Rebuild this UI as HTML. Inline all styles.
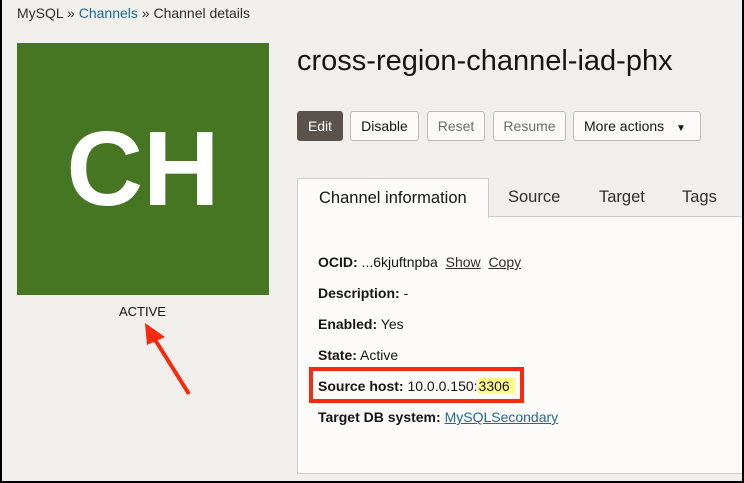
<!DOCTYPE html>
<html><head><meta charset="utf-8"><style>
*{margin:0;padding:0;box-sizing:border-box}
body{width:744px;height:483px;overflow:hidden;background:#000;font-family:"Liberation Sans",sans-serif;color:#161513}
#f{position:absolute;left:2px;top:0;width:740px;height:481px;background:#f1efec;overflow:hidden}
.a{position:absolute;white-space:nowrap}
.bc{left:15px;top:5px;font-size:14px;color:#312d2a}
.bc span{color:#1e6a8e}
.tile{left:15px;top:43px;width:252px;height:252px;background:#467622;color:#fff;font-size:106px;font-weight:bold;text-align:center;line-height:252px}
.act{left:117px;top:304px;font-size:13px;color:#161513}
h1{position:absolute;left:295px;top:45px;font-size:29px;font-weight:normal;color:#161513}
.btn{position:absolute;top:111px;height:30px;border:1px solid #bdb9b4;border-radius:3px;background:#fbfaf9;font-size:14px;line-height:28px;text-align:center;color:#161513}
.dis{color:#6f6c69}
.panel{left:295px;top:216px;width:450px;height:258px;background:#fcfbfa;border:1px solid #cfccc8}
.tab{left:295px;top:178px;width:192px;height:40px;background:#fcfbfa;border:1px solid #cfccc8;border-bottom:none;font-size:16.5px;line-height:38px;padding-left:21px}
.t2{font-size:16.5px;top:188px;color:#312d2a}
.row{position:absolute;left:316px;font-size:14px;color:#161513}
.row b{font-weight:bold}
u{color:#312d2a}
</style></head><body><div id="f">
<div class="a bc">MySQL » <span>Channels</span> » Channel details</div>
<div class="a tile">CH</div>
<div class="a act">ACTIVE</div>
<svg class="a" style="left:0;top:0" width="740" height="481"><line x1="187" y1="394" x2="152" y2="338" stroke="#f52a0e" stroke-width="4"/><polygon points="143,323 163,337 145,345" fill="#f52a0e"/></svg>
<h1>cross-region-channel-iad-phx</h1>
<div class="btn" style="left:295px;width:46px;background:#5b524e;border-color:#5b524e;color:#fff">Edit</div>
<div class="btn" style="left:348px;width:69px">Disable</div>
<div class="btn dis" style="left:425px;width:58px">Reset</div>
<div class="btn dis" style="left:491px;width:73px">Resume</div>
<div class="btn" style="left:571px;width:128px;text-align:left;padding-left:10px">More actions <span style="font-size:10px;margin-left:8px">▼</span></div>
<div class="a panel"></div>
<div class="a tab">Channel information</div>
<div class="a t2" style="left:506px">Source</div>
<div class="a t2" style="left:597px">Target</div>
<div class="a t2" style="left:680px">Tags</div>
<div class="row" style="top:254px"><b>OCID:</b> ...6kjuftnpba &nbsp;<u>Show</u> &nbsp;<u>Copy</u></div>
<div class="row" style="top:285px"><b>Description:</b> -</div>
<div class="row" style="top:316px"><b>Enabled:</b> Yes</div>
<div class="row" style="top:347px"><b>State:</b> Active</div>
<div class="a" style="left:307px;top:367px;width:215px;height:36px;border:4px solid #f52a0e"></div>
<div class="row" style="top:378px"><b>Source host:</b> 10.0.0.150:<span style="background:#fdf98a;padding:0 5px 0 1px">3306</span></div>
<div class="row" style="top:409px"><b>Target DB system:</b> <u style="color:#1e6a8e">MySQLSecondary</u></div>
</div></body></html>
